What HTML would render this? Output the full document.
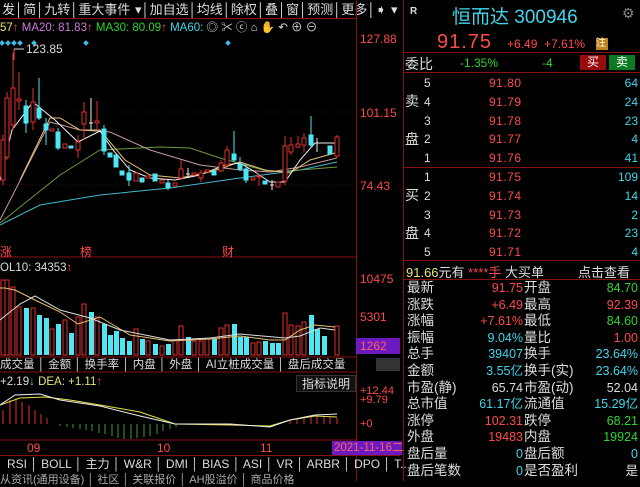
<!DOCTYPE html><html><head><meta charset="utf-8"><style>
*{margin:0;padding:0;box-sizing:border-box}
body{width:640px;height:481px;background:#000;overflow:hidden;font-family:"Liberation Sans","Noto Sans CJK SC",sans-serif;font-size:12px;color:#ccc;position:relative}
.a{position:absolute;white-space:nowrap}
.r{color:#ff4a4a}.g{color:#2fd52f}.c{color:#3fd6ea}.w{color:#ddd}.y{color:#e6e67a}
</style></head><body>
<div class="a" style="left:0;top:0;width:356px;height:19px;border-bottom:1px solid #8a1010;color:#ddd;font-size:13px;line-height:20px">
<span class="a" style="left:2px;word-spacing:1px">发│简│九转│重大事件 ▾│加自选│均线│除权│叠│窗│预测│更多│➧ ▾</span></div>
<div class="a" style="left:0;top:21px;font-size:11.5px;line-height:14px"><span class="y">57</span><span class="r">↑</span> <span style="color:#d07ad8">MA20: 81.83</span><span class="r">↑</span> <span class="g">MA30: 80.09</span><span class="r">↑</span> <span class="c">MA60:</span><span class="w"> ◎ ✂ ⓒ ⌂ ✋ ↶ ⊕ ⊖</span></div>
<div class="a" style="left:356px;top:0;width:1px;height:481px;background:#8a1010"></div>
<div class="a" style="left:403px;top:0;width:1px;height:481px;background:#8a1010"></div>
<div class="a r" style="left:360px;top:32px;font-size:12px">127.88</div>
<div class="a r" style="left:360px;top:106px;font-size:12px">101.15</div>
<div class="a r" style="left:360px;top:179px;font-size:12px">74.43</div>
<svg class="a" style="left:0;top:0" width="356" height="481">
<line x1="0" y1="112" x2="356" y2="112" stroke="#3a0a0a" stroke-dasharray="1,2"/>
<line x1="0" y1="185" x2="356" y2="185" stroke="#3a0a0a" stroke-dasharray="1,2"/>
<line x1="0" y1="257" x2="356" y2="257" stroke="#8a1010"/>
<line x1="0" y1="357" x2="356" y2="357" stroke="#8a1010"/>
<line x1="0" y1="372" x2="356" y2="372" stroke="#8a1010"/>
<line x1="0" y1="440" x2="400" y2="440" stroke="#8a1010"/>
<g fill="#3fb9e8"><rect x="0" y="41" width="4" height="4" transform="rotate(45 2 43)"/><rect x="6" y="41" width="4" height="4" transform="rotate(45 8 43)"/><rect x="12" y="41" width="4" height="4" transform="rotate(45 14 43)"/><rect x="18" y="41" width="4" height="4" transform="rotate(45 20 43)"/><rect x="32" y="41" width="4" height="4" transform="rotate(45 34 43)"/><rect x="84" y="41" width="4" height="4" transform="rotate(45 86 43)"/><rect x="226" y="41" width="4" height="4" transform="rotate(45 228 43)"/></g>
<line x1="14" y1="49" x2="24" y2="49" stroke="#ddd"/><text x="26" y="53" fill="#ddd" font-size="12" font-family="Liberation Sans">123.85</text>
<line x1="14" y1="49" x2="14" y2="60" stroke="#ff4a4a"/>
<g fill="none" stroke-width="1">
<polyline stroke="#40b8c8" points="0,225 40,205 100,195 170,188 240,178 300,170 337,162"/>
<polyline stroke="#6a9a40" points="0,223 60,175 100,150 160,147 190,148 220,158 270,172 300,170 337,167"/>
<polyline stroke="#c89aa0" points="0,220 50,122 80,130 110,132 150,150 200,165 240,170 270,172 300,167 337,158"/>
<polyline stroke="#e6c070" points="20,180 50,118 60,118 80,130 100,130 125,160 150,175 180,178 210,172 240,162 265,170 290,173 310,160 335,153"/>
<polyline stroke="#eee" points="0,180 12,130 33,102 39,107 55,120 78,142 100,131 113,150 130,170 150,178 175,180 200,175 225,165 240,163 255,172 270,182 285,182 300,160 315,143 335,143"/>
</g>
<g stroke-width="1">
<g stroke="#e03030" fill="#000">
<line x1="3" y1="135" x2="3" y2="185"/><rect x="1" y="140" width="4" height="40"/>
<line x1="7" y1="92" x2="7" y2="160"/><rect x="5" y="98" width="4" height="59"/>
<line x1="13" y1="53" x2="13" y2="130"/><rect x="11" y="88" width="4" height="37"/>
<line x1="19" y1="72" x2="19" y2="110"/><rect x="17" y="99" width="4" height="2"/>
<line x1="33" y1="88" x2="33" y2="130"/><rect x="31" y="102" width="4" height="20"/>
<rect x="50" y="129" width="4" height="2"/><rect x="63" y="144" width="4" height="4"/>
<line x1="78" y1="135" x2="78" y2="158"/><rect x="76" y="142" width="4" height="8"/>
<line x1="84" y1="102" x2="84" y2="140"/><rect x="82" y="112" width="4" height="12"/>
<line x1="97" y1="101" x2="97" y2="130"/><rect x="95" y="121" width="4" height="2"/>
<rect x="134" y="173" width="4" height="8"/><rect x="146" y="176" width="4" height="2"/><rect x="160" y="180" width="4" height="3"/><rect x="173" y="183" width="4" height="3"/>
<line x1="181" y1="160" x2="181" y2="180"/><rect x="179" y="169" width="4" height="9"/>
<rect x="192" y="173" width="4" height="2"/><line x1="201" y1="170" x2="201" y2="182"/><rect x="199" y="173" width="4" height="5"/><rect x="205" y="170" width="4" height="2"/>
<line x1="221" y1="160" x2="221" y2="172"/><rect x="219" y="163" width="4" height="8"/>
<line x1="227" y1="146" x2="227" y2="168"/><rect x="225" y="150" width="4" height="15"/>
<rect x="251" y="178" width="4" height="2"/><line x1="259" y1="174" x2="259" y2="186"/><rect x="257" y="176" width="4" height="1"/><rect x="276" y="182" width="4" height="5"/>
<line x1="285" y1="136" x2="285" y2="185"/><rect x="283" y="146" width="4" height="35"/>
<line x1="291" y1="137" x2="291" y2="155"/><rect x="289" y="145" width="4" height="7"/>
<line x1="298" y1="136" x2="298" y2="148"/><rect x="296" y="144" width="4" height="3"/>
<line x1="304" y1="133" x2="304" y2="152"/><rect x="302" y="138" width="4" height="7"/>
<line x1="337" y1="135" x2="337" y2="158"/><rect x="335" y="137" width="4" height="19"/>
</g>
<g stroke="#4ee6f2" fill="#4ee6f2">
<line x1="26" y1="100" x2="26" y2="133"/><rect x="24" y="106" width="4" height="17"/>
<line x1="39" y1="78" x2="39" y2="120"/><rect x="37" y="108" width="4" height="10"/>
<line x1="46" y1="118" x2="46" y2="145"/><rect x="44" y="124" width="4" height="6"/>
<line x1="58" y1="128" x2="58" y2="150"/><rect x="56" y="132" width="4" height="16"/>
<rect x="69" y="146" width="4" height="2"/>
<line x1="104" y1="125" x2="104" y2="155"/><rect x="102" y="129" width="4" height="22"/>
<rect x="108" y="153" width="4" height="4"/><rect x="114" y="155" width="4" height="12"/><rect x="120" y="171" width="4" height="4"/>
<line x1="129" y1="165" x2="129" y2="186"/><rect x="127" y="173" width="4" height="7"/>
<rect x="140" y="178" width="4" height="4"/><rect x="153" y="174" width="4" height="7"/><line x1="168" y1="180" x2="168" y2="190"/><rect x="166" y="183" width="4" height="5"/>
<rect x="212" y="171" width="4" height="4"/>
<line x1="234" y1="131" x2="234" y2="162"/><rect x="232" y="154" width="4" height="6"/>
<line x1="240" y1="157" x2="240" y2="171"/><rect x="238" y="164" width="4" height="5"/>
<line x1="246" y1="164" x2="246" y2="183"/><rect x="244" y="169" width="4" height="11"/>
<rect x="263" y="181" width="4" height="3"/>
<line x1="311" y1="116" x2="311" y2="148"/><rect x="309" y="135" width="4" height="10"/>
<rect x="328" y="146" width="4" height="8"/>
</g>
<g stroke="#eee"><line x1="91" y1="98" x2="91" y2="130"/><line x1="89" y1="123" x2="93" y2="123"/><line x1="188" y1="168" x2="188" y2="178"/><line x1="186" y1="174" x2="190" y2="174"/><line x1="272" y1="180" x2="272" y2="190"/><line x1="270" y1="185" x2="274" y2="185"/><line x1="317" y1="138" x2="317" y2="152"/><line x1="315" y1="143" x2="319" y2="143"/></g>
</g>
<text x="0" y="256" fill="#ff4a4a" font-size="12" font-family="Noto Sans CJK SC">涨</text>
<text x="80" y="256" fill="#ff4a4a" font-size="12" font-family="Noto Sans CJK SC">榜</text>
<text x="222" y="256" fill="#ff4a4a" font-size="12" font-family="Noto Sans CJK SC">财</text>
<g fill="none" stroke="#e03030">
<rect x="1" y="280" width="4" height="75"/><rect x="5" y="280" width="4" height="75"/><rect x="11" y="287" width="4" height="68"/><rect x="17" y="307" width="4" height="48"/><rect x="31" y="308" width="4" height="47"/><rect x="50" y="329" width="4" height="26"/><rect x="63" y="320" width="4" height="35"/><rect x="76" y="317" width="4" height="38"/><rect x="82" y="304" width="4" height="51"/><rect x="95" y="317" width="4" height="38"/><rect x="134" y="329" width="4" height="26"/><rect x="146" y="341" width="4" height="14"/><rect x="160" y="346" width="4" height="9"/><rect x="173" y="340" width="4" height="15"/><rect x="179" y="326" width="4" height="29"/><rect x="192" y="341" width="4" height="14"/><rect x="199" y="341" width="4" height="14"/><rect x="205" y="339" width="4" height="16"/><rect x="219" y="328" width="4" height="27"/><rect x="225" y="325" width="4" height="30"/><rect x="251" y="343" width="4" height="12"/><rect x="257" y="342" width="4" height="13"/><rect x="283" y="313" width="4" height="42"/><rect x="289" y="325" width="4" height="30"/><rect x="296" y="326" width="4" height="29"/><rect x="302" y="322" width="4" height="33"/><rect x="335" y="326" width="4" height="29"/>
</g>
<g fill="#4ee6f2">
<rect x="24" y="308" width="5" height="47"/><rect x="37" y="315" width="5" height="40"/><rect x="44" y="318" width="5" height="37"/><rect x="56" y="324" width="5" height="31"/><rect x="69" y="333" width="5" height="22"/><rect x="89" y="312" width="5" height="43"/><rect x="102" y="324" width="5" height="31"/><rect x="108" y="335" width="5" height="20"/><rect x="114" y="331" width="5" height="24"/><rect x="120" y="338" width="5" height="17"/><rect x="127" y="341" width="5" height="14"/><rect x="140" y="339" width="5" height="16"/><rect x="153" y="344" width="5" height="11"/><rect x="166" y="344" width="5" height="11"/><rect x="186" y="337" width="5" height="18"/><rect x="212" y="339" width="5" height="16"/><rect x="232" y="324" width="5" height="31"/><rect x="238" y="337" width="5" height="18"/><rect x="244" y="337" width="5" height="18"/><rect x="263" y="341" width="5" height="14"/><rect x="270" y="343" width="5" height="12"/><rect x="276" y="343" width="5" height="12"/><rect x="309" y="315" width="5" height="40"/><rect x="315" y="329" width="5" height="26"/><rect x="322" y="336" width="5" height="19"/>
</g>
<polyline fill="none" stroke="#e6c070" points="0,288 5,288 15,290 35,300 60,312 78,324 100,317 130,335 170,341 210,339 240,336 270,340 285,340 300,330 315,325 335,327"/>
<polyline fill="none" stroke="#ddd" points="0,320 20,304 35,296 60,310 90,318 120,330 170,340 210,338 240,334 285,338 300,336 320,328 335,330"/>
<g stroke-width="1">
<line x1="3" y1="424" x2="3" y2="410" stroke="#e03030"/><line x1="10" y1="424" x2="10" y2="400" stroke="#e03030"/><line x1="16" y1="424" x2="16" y2="398" stroke="#e03030"/><line x1="22" y1="424" x2="22" y2="402" stroke="#e03030"/><line x1="29" y1="424" x2="29" y2="405" stroke="#e03030"/><line x1="35" y1="424" x2="35" y2="410" stroke="#e03030"/><line x1="41" y1="424" x2="41" y2="414" stroke="#e03030"/><line x1="47" y1="424" x2="47" y2="418" stroke="#e03030"/>
<g stroke="#3c9a3c"><line x1="60" y1="424" x2="60" y2="426"/><line x1="67" y1="424" x2="67" y2="427"/><line x1="73" y1="424" x2="73" y2="428"/><line x1="80" y1="424" x2="80" y2="429"/><line x1="86" y1="424" x2="86" y2="430"/><line x1="92" y1="424" x2="92" y2="431"/><line x1="99" y1="424" x2="99" y2="433"/><line x1="105" y1="424" x2="105" y2="434"/><line x1="112" y1="424" x2="112" y2="436"/><line x1="118" y1="424" x2="118" y2="438"/><line x1="124" y1="424" x2="124" y2="439"/><line x1="131" y1="424" x2="131" y2="439"/><line x1="137" y1="424" x2="137" y2="438"/><line x1="144" y1="424" x2="144" y2="437"/><line x1="150" y1="424" x2="150" y2="436"/><line x1="157" y1="424" x2="157" y2="434"/><line x1="163" y1="424" x2="163" y2="431"/><line x1="170" y1="424" x2="170" y2="429"/><line x1="176" y1="424" x2="176" y2="427"/></g>
<g stroke="#e03030"><line x1="290" y1="424" x2="290" y2="420"/><line x1="297" y1="424" x2="297" y2="419"/><line x1="304" y1="424" x2="304" y2="418"/><line x1="311" y1="424" x2="311" y2="416"/><line x1="317" y1="424" x2="317" y2="416"/><line x1="324" y1="424" x2="324" y2="416"/><line x1="330" y1="424" x2="330" y2="417"/><line x1="337" y1="424" x2="337" y2="418"/></g>
</g>
<polyline fill="none" stroke="#e6e040" points="0,405 20,398 45,397 70,400 100,405 140,412 175,424 230,425 270,426 290,420 315,416 337,417"/>
<polyline fill="none" stroke="#eee" points="0,405 15,395 40,394 60,400 100,406 140,416 175,424 230,424 270,427 290,420 315,415 337,414"/>
</svg>
<div class="a w" style="left:0;top:262px;font-size:11.5px">OL10: 34353<span class="r">↑</span></div>
<div class="a r" style="left:360px;top:272px">10475</div>
<div class="a r" style="left:360px;top:310px">5301</div>
<div class="a" style="left:356px;top:338px;width:44px;height:16px;background:#6a1ac0;color:#ff6060;padding-left:4px;line-height:16px">1262</div>
<div class="a w" style="left:0;top:358px;font-size:11.5px;line-height:14px">成交量 │ 金额 │ 换手率 │ 内盘 │ 外盘 │ AI立桩成交量 │ 盘后成交量</div>
<div class="a" style="left:376px;top:358px;width:24px;height:13px;background:#333"></div>
<div class="a w" style="left:0;top:376px;font-size:11.5px">+2.19<span class="c">↓</span> <span class="y">DEA: +1.11</span><span class="r">↑</span></div>
<div class="a w" style="left:296px;top:375px;width:60px;height:17px;background:#111;border:1px solid #333;text-align:center;line-height:16px">指标说明</div>
<div class="a r" style="left:360px;top:387px;font-size:11px;line-height:9px">+12.44<br>+9.79</div>
<div class="a r" style="left:360px;top:418px;font-size:11px">+0</div>
<div class="a r" style="left:27px;top:441px;font-size:12px">09</div>
<div class="a r" style="left:157px;top:441px;font-size:12px">10</div>
<div class="a r" style="left:260px;top:441px;font-size:12px">11</div>
<div class="a" style="left:332px;top:441px;width:70px;height:14px;background:#6a1ac0;color:#ff6060;font-size:11.5px;line-height:14px;padding-left:2px">2021-11-16二</div>
<div class="a w" style="left:0;top:455px;width:400px;height:16px;border-top:1px solid #8a1010;font-size:12px;line-height:16px;padding-left:7px">RSI │ BOLL │ 主力 │ W&amp;R │ DMI │ BIAS │ ASI │ VR │ ARBR │ DPO │ T..</div>
<div class="a w" style="left:0;top:471px;font-size:11px;color:#aaa">从资讯(通用设备) │ 社区 │ 关联报价 │ AH股溢价 │ 商品价格</div>
<div class="a w" style="left:410px;top:6px;font-size:10px;font-weight:bold">R</div>
<div class="a c" style="left:452px;top:2px;font-size:19px">恒而达 300946</div>
<div class="a" style="left:622px;top:5px;color:#888;font-size:14px">⚙</div>
<div class="a r" style="left:437px;top:31px;font-size:20px;letter-spacing:1px">91.75</div>
<div class="a r" style="left:507px;top:37px;font-size:12px">+6.49 &nbsp;+7.61%</div>
<div class="a" style="left:596px;top:38px;width:12px;height:12px;background:#c08020;color:#ffe;font-size:10px;line-height:12px">注</div>
<div class="a" style="left:404px;top:52px;width:236px;height:1px;background:#8a1010"></div>
<div class="a w" style="left:405px;top:54px;font-size:14px">委比</div>
<div class="a g" style="left:460px;top:56px">-1.35%</div>
<div class="a g" style="left:542px;top:56px">-4</div>
<div class="a" style="left:580px;top:55px;width:26px;height:15px;background:#9a0c0c;color:#fff;text-align:center;line-height:15px">买</div>
<div class="a" style="left:609px;top:55px;width:26px;height:15px;background:#0c7a20;color:#fff;text-align:center;line-height:15px">卖</div>
<div class="a" style="left:404px;top:72px;width:236px;height:1px;background:#8a1010"></div>
<div class="a w" style="left:405px;top:82px;font-size:14px;line-height:38px">卖<br>盘</div>
<div class="a w" style="left:405px;top:176px;font-size:14px;line-height:38px">买<br>盘</div>
<div class="a w" style="left:424px;top:74px;line-height:18.8px;font-size:12px">5<br>4<br>3<br>2<br>1</div>
<div class="a r" style="left:489px;top:74px;line-height:18.8px;font-size:12px;letter-spacing:.5px">91.80<br>91.79<br>91.78<br>91.77<br>91.76</div>
<div class="a c" style="left:600px;top:74px;width:38px;text-align:right;line-height:18.8px;font-size:12px">64<br>24<br>23<br>4<br>41</div>
<div class="a" style="left:404px;top:167px;width:236px;height:1px;background:#8a1010"></div>
<div class="a w" style="left:424px;top:168px;line-height:18.8px;font-size:12px">1<br>2<br>3<br>4<br>5</div>
<div class="a r" style="left:489px;top:168px;line-height:18.8px;font-size:12px;letter-spacing:.5px">91.75<br>91.74<br>91.73<br>91.72<br>91.71</div>
<div class="a c" style="left:600px;top:168px;width:38px;text-align:right;line-height:18.8px;font-size:12px">109<br>14<br>2<br>23<br>4</div>
<div class="a" style="left:404px;top:260px;width:236px;height:1px;background:#8a1010"></div>
<div class="a" style="left:406px;top:262px;font-size:13px"><span class="y">91.66</span><span class="w">元有 </span><span class="r">****手</span><span class="w"> 大买单</span></div>
<div class="a w" style="left:578px;top:262px;font-size:13px">点击查看</div>
<div class="a" style="left:404px;top:279px;width:236px;height:1px;background:#8a1010"></div>
<div class="a w" style="left:407px;top:280px;font-size:13.5px;line-height:16.6px">最新<br>涨跌<br>涨幅<br>振幅<br>总手<br>金额<br>市盈(静)<br>总市值<br>涨停<br>外盘<br>盘后量<br>盘后笔数</div>
<div class="a" style="left:440px;top:280px;width:83px;text-align:right;font-size:12.5px;line-height:16.6px"><span class="r">91.75</span><br><span class="r">+6.49</span><br><span class="r">+7.61%</span><br><span class="c">9.04%</span><br><span class="c">39407</span><br><span class="c">3.55亿</span><br><span class="w">65.74</span><br><span class="c">61.17亿</span><br><span class="r">102.31</span><br><span class="r">19483</span><br><span class="c">0</span><br><span class="c">0</span></div>
<div class="a w" style="left:524px;top:280px;font-size:13.5px;line-height:16.6px">开盘<br>最高<br>最低<br>量比<br>换手<br>换手(实)<br>市盈(动)<br>流通值<br>跌停<br>内盘<br>盘后额<br>是否盈利</div>
<div class="a" style="left:560px;top:280px;width:78px;text-align:right;font-size:12.5px;line-height:16.6px"><span class="g">84.70</span><br><span class="r">92.39</span><br><span class="g">84.60</span><br><span class="r">1.00</span><br><span class="c">23.64%</span><br><span class="c">23.64%</span><br><span class="w">52.04</span><br><span class="c">15.29亿</span><br><span class="g">68.21</span><br><span class="g">19924</span><br><span class="c">0</span><br><span class="w">是</span></div>
</body></html>
